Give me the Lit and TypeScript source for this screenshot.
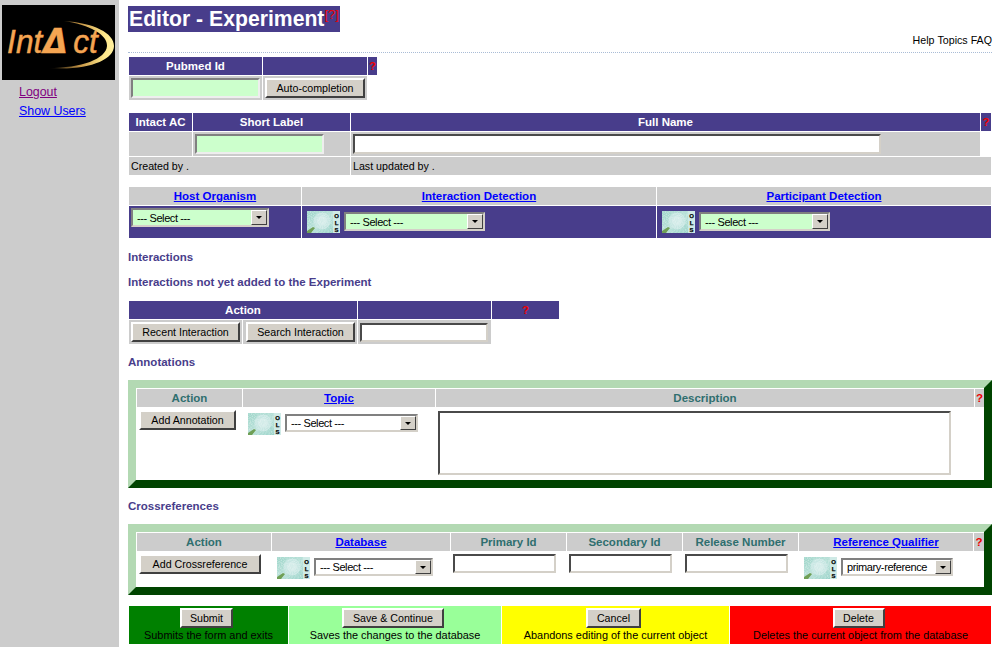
import { LitElement, html, css } from "lit"
import { customElement } from "lit/decorators.js"

const olsIcon = () => html`
  <svg class="ols" width="33" height="22" viewBox="0 0 33 22">
    <defs>
      <linearGradient id="tex" x1="0" y1="0" x2="1" y2="1">
        <stop offset="0" stop-color="#9fd6ca" />
        <stop offset="0.5" stop-color="#b7e0d8" />
        <stop offset="1" stop-color="#8fcfc4" />
      </linearGradient>
      <filter id="speck" x="0" y="0" width="100%" height="100%">
        <feTurbulence type="fractalNoise" baseFrequency="0.9" numOctaves="2" seed="4" />
        <feColorMatrix values="0 0 0 0 1  0 0 0 0 1  0 0 0 0 1  1.6 0 0 0 -0.55" />
      </filter>
    </defs>
    <rect width="33" height="22" fill="url(#tex)" />
    <circle cx="15" cy="10" r="8.5" fill="#c6e6e2" />
    <circle cx="15" cy="10" r="5" fill="#d2ebe8" />
    <rect width="33" height="22" filter="url(#speck)" opacity="0.45" />
    <path d="M0 22 L0 20 L6 16 L8 17 L4 22 Z" fill="#6f9f55" />
    <rect x="26" y="0" width="7" height="22" fill="#cfeae6" />
    <text x="29.5" y="6.5" class="ols-l">O</text>
    <text x="29.5" y="13.5" class="ols-l">L</text>
    <text x="29.5" y="20.5" class="ols-l">S</text>
  </svg>
`

const logo = () => html`
  <svg class="logo" width="113" height="75" viewBox="0 0 113 75" role="img" aria-label="IntAct logo">
    <defs>
      <linearGradient id="swoosh" x1="0" y1="0" x2="1" y2="0">
        <stop offset="0" stop-color="#000" />
        <stop offset="0.5" stop-color="#c89848" />
        <stop offset="0.85" stop-color="#ffe88a" />
        <stop offset="1" stop-color="#fff0a0" />
      </linearGradient>
    </defs>
    <rect width="113" height="75" fill="#000" />
    <path
      d="M62 16 C92 18 112 28 112 41 C112 55 86 66 46 63 C80 63 104 54 105 41 C106 30 88 20 62 16 Z"
      fill="url(#swoosh)"
    />
    <g transform="scale(0.93 1)">
      <text x="5.5" y="48" class="logo-t">Int<tspan class="logo-a" dx="1">Δ</tspan><tspan dx="6">ct</tspan></text>
    </g>
  </svg>
`

const select = (cls: string, text = "--- Select ---") => html`
  <span class="sel ${cls}">
    <select><option>${text}</option></select>
    <span class="arrow"></span>
  </span>
`

@customElement("app-root")
export class AppRoot extends LitElement {
  static styles = css`
    :host {
      display: flex;
      min-height: 647px;
      font-family: "Liberation Sans", Arial, sans-serif;
      font-size: 10.67px;
      color: #000;
      background: #fff;
    }

    .side {
      width: 119px;
      flex: none;
      background: #ccc;
      box-sizing: border-box;
      padding: 5px 0 0 2px;
    }
    .logo {
      display: block;
    }
    .logo-t {
      font: italic 400 34px "Liberation Sans", sans-serif;
      fill: #f5a552;
      stroke: #f5a552;
      stroke-width: 0.5;
    }
    .logo-a {
      font: italic 700 34px "DejaVu Sans", sans-serif;
    }
    .nav {
      display: flex;
      flex-direction: column;
      gap: 5px;
      margin: 5px 0 0 17px;
      font-size: 12.4px;
      line-height: 14px;
    }
    .nav a {
      color: #00f;
    }
    .nav a.seen {
      color: #800080;
    }

    .main {
      flex: 1;
      min-width: 0;
      padding: 6px 4px 0 9px;
    }
    .top {
      height: 28px;
    }
    .title {
      display: inline-block;
      vertical-align: top;
      height: 26px;
      line-height: 26px;
      padding: 0 1px;
      background: #483d8b;
      color: #fff;
      font-size: 21.2px;
      font-weight: bold;
    }
    .title sup {
      color: #e00;
      font-size: 13px;
      font-weight: normal;
      line-height: 0;
      vertical-align: 7px;
    }
    .help {
      display: flex;
      justify-content: flex-end;
      gap: 3px;
      line-height: 12px;
      margin-bottom: 6px;
    }
    .rule {
      border-top: 1px dotted #a9bcd6;
    }

    .grid {
      display: grid;
      gap: 1px;
      margin-left: 1px;
    }
    .g-pub {
      grid-template-columns: 133px 104px 9px;
      grid-template-rows: 18px 24px;
      margin-top: 4px;
    }
    .g-name {
      grid-template-columns: 63px 157px 629px 10px;
      grid-template-rows: 18px 24px 18px;
      margin-top: 13px;
    }
    .g-org {
      grid-template-columns: 172px 354px 334px;
      grid-template-rows: 18px 32px;
      margin-top: 12px;
    }
    .g-int {
      grid-template-columns: 113px 114px 133px 67px;
      grid-template-rows: 18px 24px;
    }
    .g-ann {
      grid-template-columns: 105px 192px 538px 9px;
      grid-template-rows: 18px 72px;
      margin-left: 0;
    }
    .g-xref {
      grid-template-columns: 134px 178px 115px 115px 115px 174px 10px;
      grid-template-rows: 18px 35px;
      margin-left: 0;
    }
    .g-foot {
      grid-template-columns: 159px 212px 227px 261px;
      grid-template-rows: 38px;
      margin-top: 11px;
    }

    .h {
      background: #483d8b;
      color: #fff;
      font-size: 11.5px;
      font-weight: bold;
      line-height: 18px;
      text-align: center;
    }
    .c {
      background: #ccc;
      box-sizing: border-box;
      display: flex;
      align-items: flex-start;
      padding: 2px;
    }
    .note {
      align-items: center;
      padding: 0 2px;
    }
    .span2 {
      grid-column: span 2;
    }
    .lh {
      background: #ccc;
      font-size: 11.5px;
      font-weight: bold;
      line-height: 18px;
      text-align: center;
      color: #2f6f6f;
    }
    .lh a {
      color: #00f;
    }
    .h.q,
    .lh.q {
      color: #e00;
    }
    .purple {
      background: #483d8b;
      display: flex;
      align-items: flex-start;
      box-sizing: border-box;
      padding: 2px;
    }
    .ols-cell {
      gap: 4px;
      padding: 5px 0 0 5px;
    }
    .ols {
      display: block;
      flex: none;
    }
    .ols-l {
      font: bold 6px "Liberation Sans", sans-serif;
      text-anchor: middle;
      fill: #000;
      stroke: #000;
      stroke-width: 0.25;
    }

    .sec {
      color: #483d8b;
      font-size: 11.5px;
      font-weight: bold;
      line-height: 14px;
    }
    .s-int {
      margin-top: 12px;
    }
    .s-not {
      margin-top: 11px;
      margin-bottom: 12px;
    }
    .s-ann {
      margin-top: 11px;
      margin-bottom: 11px;
    }
    .s-xref {
      margin-top: 11px;
      margin-bottom: 11px;
    }

    input,
    textarea {
      display: block;
      box-sizing: border-box;
      margin: 0;
      padding: 1px 2px;
      height: 20px;
      background: #fff;
      border: 2px solid;
      border-color: #4a4a4a #d4d0c8 #d4d0c8 #4a4a4a;
      border-radius: 0;
      font: inherit;
      outline: none;
      resize: none;
    }
    .green {
      background: #ccffcc;
      border-color: #808080 #eee #eee #808080;
    }
    .w129 {
      width: 129px;
    }
    .w528 {
      width: 528px;
    }
    .w128 {
      width: 128px;
      height: 19px;
      margin-top: 1px;
    }
    .w103 {
      width: 103px;
      height: 19px;
    }
    textarea {
      width: 513px;
      height: 64px;
    }

    button {
      display: block;
      box-sizing: border-box;
      height: 20px;
      margin: 0;
      padding: 0;
      background: #d4d0c8;
      border: 2px solid;
      border-color: #fff #404040 #404040 #fff;
      font: 10.67px "Liberation Sans", sans-serif;
      color: #000;
    }
    .b-auto {
      width: 100px;
    }
    .b-recent {
      width: 109px;
    }
    .b-search {
      width: 110px;
      margin-left: 1px;
    }
    .b-ann {
      width: 97px;
    }
    .b-xref {
      width: 122px;
    }
    .b-submit {
      width: 53px;
    }
    .b-save {
      width: 102px;
    }
    .b-cancel {
      width: 55px;
    }
    .b-delete {
      width: 52px;
    }

    .drop1 {
      display: flex;
      margin-top: 1px;
    }
    .sel {
      display: inline-grid;
      grid-template-rows: 1fr;
      box-sizing: border-box;
      height: 19px;
      background: #fff;
      border: 2px solid;
      border-color: #808080 #d4d0c8 #d4d0c8 #808080;
      flex: none;
    }
    .sel select {
      grid-area: 1 / 1;
      appearance: none;
      border: 0;
      margin: 0;
      padding: 0 0 0 4px;
      background: transparent;
      font: 11px "Liberation Sans", sans-serif;
      letter-spacing: -0.4px;
      color: #000;
      outline: none;
      min-width: 0;
      width: 100%;
      height: 100%;
    }
    .arrow {
      grid-area: 1 / 1;
      justify-self: end;
      width: 16px;
      box-sizing: border-box;
      background: #d4d0c8;
      border: 1px solid;
      border-color: #fff #404040 #404040 #fff;
      display: flex;
      align-items: center;
      justify-content: center;
      pointer-events: none;
    }
    .arrow::after {
      content: "";
      border: 3px solid transparent;
      border-top: 3px solid #000;
      border-bottom: 0;
    }
    .sel-g {
      background: #ccffcc;
    }
    .s138 {
      width: 138px;
    }
    .s141 {
      width: 141px;
    }
    .s131 {
      width: 131px;
    }
    .s133 {
      width: 133px;
      height: 18px;
    }
    .s119 {
      width: 119px;
      height: 18px;
    }
    .s112 {
      width: 112px;
      height: 18px;
    }

    .box {
      box-sizing: border-box;
      border: 8px solid;
      border-color: #b3d9b3 #004400 #004400 #b3d9b3;
      background: #fff;
      padding: 1px 0 0 1px;
    }
    .w {
      background: #fff;
      box-sizing: border-box;
      display: flex;
      align-items: flex-start;
    }
    .pad {
      padding: 2px;
    }
    .desc {
      padding: 3px 2px 0;
    }
    .w-ols {
      padding: 5px 0 0 5px;
      gap: 4px;
    }

    .foot {
      display: flex;
      flex-direction: column;
      align-items: center;
      padding-top: 2px;
      font-size: 10.9px;
      line-height: 12px;
      gap: 1px;
    }
    .foot button {
      margin-right: 4px;
    }
    .f-submit {
      background: #008000;
    }
    .f-save {
      background: #99ff99;
    }
    .f-cancel {
      background: #ffff00;
    }
    .f-delete {
      background: #ff0000;
    }
  `

  render() {
    return html`
      <div class="side">
        ${logo()}
        <div class="nav">
          <a class="seen" href="#">Logout</a>
          <a href="#">Show Users</a>
        </div>
      </div>
      <div class="main">
        <div class="top">
          <span class="title">Editor - Experiment<sup>[?]</sup></span>
        </div>
        <div class="help"><span>Help</span><span>Topics</span><span>FAQ</span></div>
        <div class="rule"></div>

        <div class="grid g-pub">
          <div class="h">Pubmed Id</div>
          <div class="h"></div>
          <div class="h q">?</div>
          <div class="c"><input class="green w129" /></div>
          <div class="c"><button class="b-auto">Auto-completion</button></div>
        </div>

        <div class="grid g-name">
          <div class="h">Intact AC</div>
          <div class="h">Short Label</div>
          <div class="h">Full Name</div>
          <div class="h q">?</div>
          <div class="c"></div>
          <div class="c"><input class="green w129" /></div>
          <div class="c"><input class="w528" /></div>
          <div class="w"></div>
          <div class="c note span2">Created by .</div>
          <div class="c note span2">Last updated by .</div>
        </div>

        <div class="grid g-org">
          <div class="lh"><a href="#">Host Organism</a></div>
          <div class="lh"><a href="#">Interaction Detection</a></div>
          <div class="lh"><a href="#">Participant Detection</a></div>
          <div class="purple">${select("sel-g s138")}</div>
          <div class="purple ols-cell">${olsIcon()}<span class="drop1">${select("sel-g s141")}</span></div>
          <div class="purple ols-cell">${olsIcon()}<span class="drop1">${select("sel-g s131")}</span></div>
        </div>

        <div class="sec s-int">Interactions</div>
        <div class="sec s-not">Interactions not yet added to the Experiment</div>

        <div class="grid g-int">
          <div class="h span2">Action</div>
          <div class="h"></div>
          <div class="h q">?</div>
          <div class="c"><button class="b-recent">Recent Interaction</button></div>
          <div class="c"><button class="b-search">Search Interaction</button></div>
          <div class="c"><input class="w128" /></div>
        </div>

        <div class="sec s-ann">Annotations</div>
        <div class="box">
          <div class="grid g-ann">
            <div class="lh">Action</div>
            <div class="lh"><a href="#">Topic</a></div>
            <div class="lh">Description</div>
            <div class="lh q">?</div>
            <div class="w pad"><button class="b-ann">Add Annotation</button></div>
            <div class="w w-ols">${olsIcon()}<span class="drop1">${select("s133")}</span></div>
            <div class="w desc"><textarea></textarea></div>
          </div>
        </div>

        <div class="sec s-xref">Crossreferences</div>
        <div class="box">
          <div class="grid g-xref">
            <div class="lh">Action</div>
            <div class="lh"><a href="#">Database</a></div>
            <div class="lh">Primary Id</div>
            <div class="lh">Secondary Id</div>
            <div class="lh">Release Number</div>
            <div class="lh"><a href="#">Reference Qualifier</a></div>
            <div class="lh q">?</div>
            <div class="w pad"><button class="b-xref">Add Crossreference</button></div>
            <div class="w w-ols">${olsIcon()}<span class="drop1">${select("s119")}</span></div>
            <div class="w pad"><input class="w103" /></div>
            <div class="w pad"><input class="w103" /></div>
            <div class="w pad"><input class="w103" /></div>
            <div class="w w-ols">${olsIcon()}<span class="drop1">${select("s112", "primary-reference")}</span></div>
          </div>
        </div>

        <div class="grid g-foot">
          <div class="foot f-submit"><button class="b-submit">Submit</button>Submits the form and exits</div>
          <div class="foot f-save"><button class="b-save">Save &amp; Continue</button>Saves the changes to the database</div>
          <div class="foot f-cancel"><button class="b-cancel">Cancel</button>Abandons editing of the current object</div>
          <div class="foot f-delete"><button class="b-delete">Delete</button>Deletes the current object from the database</div>
        </div>
      </div>
    `
  }
}
